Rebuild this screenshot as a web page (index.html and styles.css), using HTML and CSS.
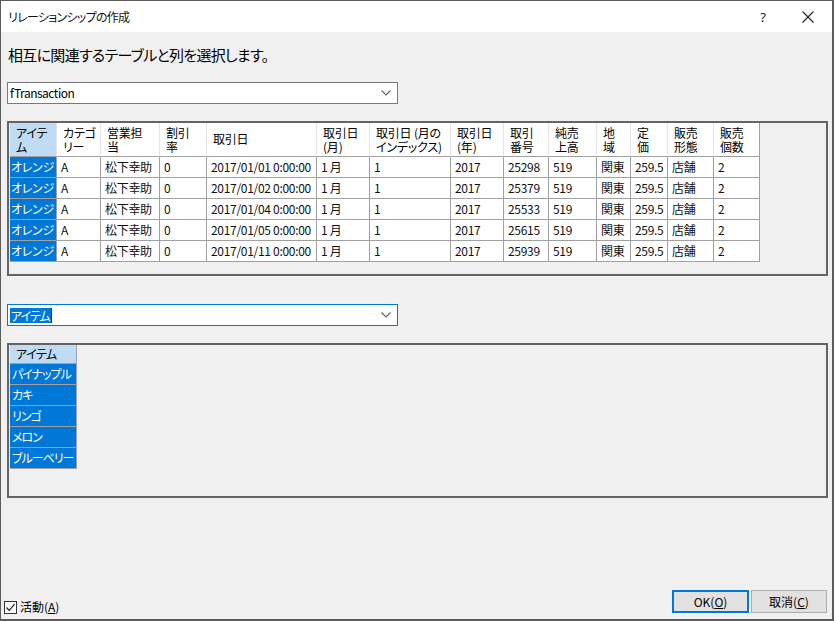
FILE: index.html
```html
<!DOCTYPE html>
<html lang="ja">
<head>
<meta charset="utf-8">
<title>リレーションシップの作成</title>
<link rel="stylesheet" href="styles.css">
</head>
<body>
<div class="window">
  <div class="titlebar">
    <span class="title">リレーションシップの作成</span>
    <span class="tb-btn help">?</span>
    <span class="tb-btn close">
      <svg width="12" height="12" viewBox="0 0 12 12"><path d="M0.5 0.5 L11.5 11.5 M11.5 0.5 L0.5 11.5" stroke="#222" stroke-width="1.1" fill="none"/></svg>
    </span>
  </div>
  <div class="content">
    <div class="label">相互に関連するテーブルと列を選択します。</div>
    <div class="combo">
      <span class="combo-text latin">fTransaction</span>
      <svg class="chev" width="10" height="6" viewBox="0 0 10 6"><path d="M0.5 0.5 L5 5 L9.5 0.5" stroke="#606060" stroke-width="1.1" fill="none"/></svg>
    </div>
    <div class="box box1">
      <div class="grid grid1">
        <div class="h sel"><span>アイテ</span><span>ム</span></div>
        <div class="h"><span>カテゴ</span><span>リー</span></div>
        <div class="h"><span>営業担</span><span>当</span></div>
        <div class="h"><span>割引</span><span>率</span></div>
        <div class="h h1"><span>取引日</span></div>
        <div class="h"><span>取引日</span><span>(月)</span></div>
        <div class="h"><span>取引日 (月の</span><span>インデックス)</span></div>
        <div class="h"><span>取引日</span><span>(年)</span></div>
        <div class="h"><span>取引</span><span>番号</span></div>
        <div class="h"><span>純売</span><span>上高</span></div>
        <div class="h"><span>地</span><span>域</span></div>
        <div class="h"><span>定</span><span>価</span></div>
        <div class="h"><span>販売</span><span>形態</span></div>
        <div class="h"><span>販売</span><span>個数</span></div>

        <div class="c first">オレンジ</div><div class="c">A</div><div class="c">松下幸助</div><div class="c">0</div><div class="c">2017/01/01 0:00:00</div><div class="c">1 月</div><div class="c">1</div><div class="c">2017</div><div class="c">25298</div><div class="c">519</div><div class="c">関東</div><div class="c">259.5</div><div class="c">店舗</div><div class="c">2</div>
        <div class="c first">オレンジ</div><div class="c">A</div><div class="c">松下幸助</div><div class="c">0</div><div class="c">2017/01/02 0:00:00</div><div class="c">1 月</div><div class="c">1</div><div class="c">2017</div><div class="c">25379</div><div class="c">519</div><div class="c">関東</div><div class="c">259.5</div><div class="c">店舗</div><div class="c">2</div>
        <div class="c first">オレンジ</div><div class="c">A</div><div class="c">松下幸助</div><div class="c">0</div><div class="c">2017/01/04 0:00:00</div><div class="c">1 月</div><div class="c">1</div><div class="c">2017</div><div class="c">25533</div><div class="c">519</div><div class="c">関東</div><div class="c">259.5</div><div class="c">店舗</div><div class="c">2</div>
        <div class="c first">オレンジ</div><div class="c">A</div><div class="c">松下幸助</div><div class="c">0</div><div class="c">2017/01/05 0:00:00</div><div class="c">1 月</div><div class="c">1</div><div class="c">2017</div><div class="c">25615</div><div class="c">519</div><div class="c">関東</div><div class="c">259.5</div><div class="c">店舗</div><div class="c">2</div>
        <div class="c first">オレンジ</div><div class="c">A</div><div class="c">松下幸助</div><div class="c">0</div><div class="c">2017/01/11 0:00:00</div><div class="c">1 月</div><div class="c">1</div><div class="c">2017</div><div class="c">25939</div><div class="c">519</div><div class="c">関東</div><div class="c">259.5</div><div class="c">店舗</div><div class="c">2</div>
      </div>
    </div>
    <div class="combo combo2">
      <span class="combo-text"><span class="hl">アイテム</span><span class="caret"></span></span>
      <svg class="chev" width="10" height="6" viewBox="0 0 10 6"><path d="M0.5 0.5 L5 5 L9.5 0.5" stroke="#606060" stroke-width="1.1" fill="none"/></svg>
    </div>
    <div class="box box2">
      <div class="grid grid2">
        <div class="h2">アイテム</div>
        <div class="c first">パイナップル</div>
        <div class="c first">カキ</div>
        <div class="c first">リンゴ</div>
        <div class="c first">メロン</div>
        <div class="c first">ブルーベリー</div>
      </div>
    </div>
    <div class="spacer"></div>
    <div class="footer">
      <label class="check">
        <span class="checkbox">
          <svg width="11" height="11" viewBox="0 0 11 11"><path d="M1.5 5.5 L4.2 8.3 L9.6 2.2" stroke="#222" stroke-width="1.2" fill="none"/></svg>
        </span>
        <span>活動(<u>A</u>)</span>
      </label>
      <div class="buttons">
        <button class="btn default">OK(<u>O</u>)</button>
        <button class="btn">取消(<u>C</u>)</button>
      </div>
    </div>
  </div>
</div>
</body>
</html>
```
FILE: styles.css
```css
* { box-sizing: border-box; }
html, body {
  margin: 0;
  padding: 0;
  width: 834px;
  height: 621px;
  overflow: hidden;
  font-family: "Noto Sans CJK JP", "Noto Sans", sans-serif;
  font-feature-settings: "palt" 1;
  color: #000;
}
.window {
  width: 834px;
  height: 621px;
  border: 1px solid #5c5c5c;
  border-right-width: 2px;
  border-bottom-width: 2px;
  display: flex;
  flex-direction: column;
  background: #f0f0f0;
}
.titlebar {
  height: 31px;
  background: #fff;
  display: flex;
  align-items: center;
  padding-left: 7px;
  flex: none;
}
.title {
  font-size: 12px;
  letter-spacing: -0.7px;
  color: #111;
  flex: 1;
  line-height: 14px;
}
.tb-btn {
  display: flex;
  align-items: center;
  justify-content: center;
  font-size: 13px;
  color: #222;
}
.help { width: 20px; margin-right: 25px; font-family: "Noto Sans", sans-serif; }
.close { width: 20px; margin-right: 14px; }
.content {
  flex: 1;
  display: flex;
  flex-direction: column;
  padding: 0 5px 5px 6px;
}
.label {
  margin-top: 13px;
  font-size: 15px;
  line-height: 19px;
  letter-spacing: -0.7px;
  padding-left: 1px;
}
.combo {
  margin-top: 18px;
  width: 391px;
  height: 22px;
  background: #fff;
  border: 1px solid #7a7a7a;
  display: flex;
  align-items: center;
  padding: 0 6px 0 2px;
}
.combo-text {
  flex: 1;
  font-size: 12px;
  line-height: 14px;
  display: flex;
  align-items: center;
}
.combo-text.latin { letter-spacing: -0.5px; }
.chev { flex: none; }
.box {
  margin-top: 17px;
  width: 821px;
  border: 2px solid #646464;
  background: #f0f0f0;
  padding-left: 1px;
}
.box1 { height: 155px; }
.box2 { height: 155px; }
.grid {
  display: grid;
  font-size: 12px;
  line-height: 14px;
}
.grid1 {
  grid-template-columns: 47px 44px 59px 47px 110px 53px 81px 53px 45px 48px 34px 37px 46px 46px;
  grid-template-rows: 34px repeat(5, 21px);
  width: 750px;
}
.h {
  background: #fff;
  border-right: 1px solid #e4e4e4;
  border-bottom: 1px solid #a0a0a0;
  padding: 3px 0 0 6px;
  white-space: nowrap;
  overflow: hidden;
  letter-spacing: -0.2px;
  display: flex;
  flex-direction: column;
  gap: 1px;
}
.h span { display: block; height: 13px; line-height: 13px; }
.h:nth-child(14) { border-right-color: #a0a0a0; }
.h1 { padding-top: 9px; }
.h.sel { background: #bfdcf4; }
.c {
  background: #fff;
  border-right: 1px solid #a0a0a0;
  border-bottom: 1px solid #a0a0a0;
  padding: 3px 0 0 4px;
  white-space: nowrap;
  overflow: hidden;
  color: #111;
  letter-spacing: -0.3px;
}
.c.first {
  background: #0078d7;
  color: #fff;
  padding-left: 1px;
}
.combo2 {
  margin-top: 28px;
  border-color: #0078d7;
}
.hl {
  background: #0078d7;
  color: #fff;
  line-height: 15px;
  padding: 0 1px;
  letter-spacing: -1px;
}
.caret {
  display: inline-block;
  width: 1px;
  height: 15px;
  background: #4a1a10;
}
.grid2 {
  grid-template-columns: 67px;
  grid-template-rows: 19px repeat(5, 21px);
  width: 67px;
}
.h2 {
  background: #bfdcf4;
  border-right: 1px solid #a0a0a0;
  border-bottom: 1px solid #a0a0a0;
  padding: 2px 0 0 6px;
  line-height: 14px;
  letter-spacing: -0.5px;
}
.grid2 .c { padding-left: 2px; letter-spacing: -1px; }
.spacer { flex: 1; }
.footer {
  display: flex;
  align-items: flex-end;
  justify-content: space-between;
  margin-left: -3px;
}
.check {
  display: flex;
  align-items: center;
  gap: 3px;
  font-size: 12px;
  line-height: 14px;
}
.checkbox {
  width: 13px;
  height: 13px;
  border: 1px solid #333;
  background: #fff;
  display: flex;
  align-items: center;
  justify-content: center;
}
.buttons {
  display: flex;
  gap: 2px;
  margin-bottom: 1px;
}
.btn {
  font-family: inherit;
  font-feature-settings: "palt" 1;
  font-size: 12px;
  line-height: 14px;
  height: 23px;
  width: 76px;
  background: #e1e1e1;
  border: 1px solid #adadad;
  color: #000;
  padding: 0;
  border-radius: 0;
}
.btn.default {
  width: 77px;
  border: 2px solid #0078d7;
}
```
